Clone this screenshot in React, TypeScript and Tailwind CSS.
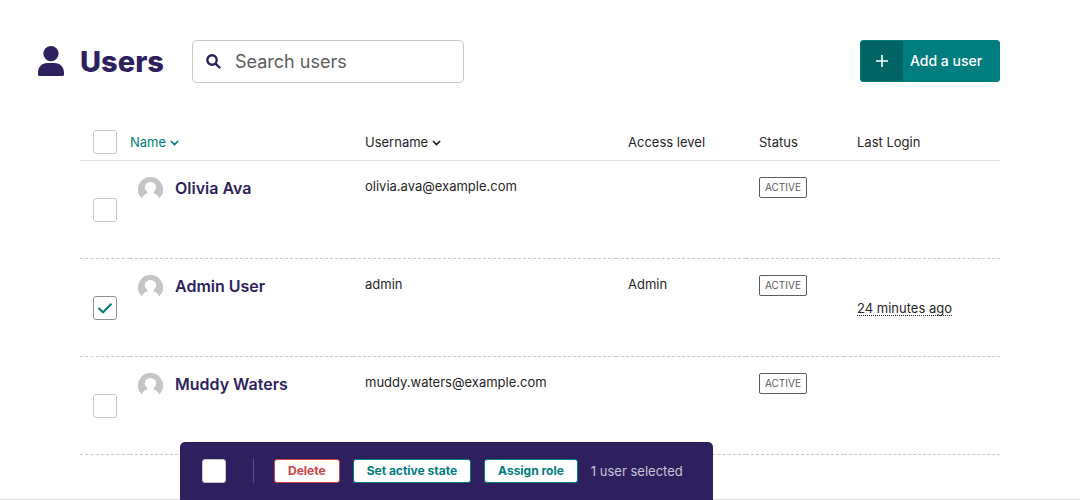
import { useState } from "react";

type User = {
  name: string;
  username: string;
  access?: string;
  lastLogin?: string;
};

const users: User[] = [
  { name: "Olivia Ava", username: "olivia.ava@example.com" },
  { name: "Admin User", username: "admin", access: "Admin", lastLogin: "24 minutes ago" },
  { name: "Muddy Waters", username: "muddy.waters@example.com" },
];

function Checkbox({
  label,
  checked,
  onChange,
}: {
  label: string;
  checked: boolean;
  onChange: () => void;
}) {
  return (
    <label className="relative block size-6">
      <input
        type="checkbox"
        aria-label={label}
        checked={checked}
        onChange={onChange}
        className="peer block size-6 appearance-none rounded-[3px] border border-[#c8c8c8] bg-white checked:border-[#929292]"
      />
      <svg
        viewBox="0 0 24 24"
        className="pointer-events-none absolute inset-0 hidden size-6 peer-checked:block"
        fill="none"
        stroke="#007d7e"
        strokeWidth="2"
        aria-hidden="true"
      >
        <path d="M5.500 12l4.500 4.300L18.500 7.700" />
      </svg>
    </label>
  );
}

function Chevron() {
  return (
    <svg viewBox="0 0 9 8" width="9" height="8" fill="none" stroke="currentColor" strokeWidth="1.500" strokeLinecap="round" strokeLinejoin="round" aria-hidden="true">
      <path d="M1.300 3.400l3.200 3.200 3.200-3.200" />
    </svg>
  );
}

function Avatar() {
  return (
    <svg viewBox="0 0 25 25" className="size-[25px] shrink-0" aria-hidden="true">
      <path
        fill="#c5c5c5"
        d="M12.5 0A12.5 12.5 0 0 0 3.8 21.5C4.8 18.6 6.8 17 9.6 16.2 9.4 15.2 9 14.600 8.400 14 7.300 12.900 6.800 11.500 6.800 10.300 6.800 7.300 9.300 5 12.500 5s5.700 2.300 5.700 5.300c0 1.200-.5 2.600-1.600 3.700-.6.600-1 1.200-1.200 2.200 2.800.8 4.800 2.400 5.800 5.300A12.500 12.500 0 0 0 12.500 0z"
      />
    </svg>
  );
}

export default function App() {
  const [selected, setSelected] = useState<string[]>(["Admin User"]);
  const allSelected = selected.length === users.length;
  const toggle = (name: string) =>
    setSelected((s) => (s.includes(name) ? s.filter((n) => n !== name) : [...s, name]));
  const toggleAll = () => setSelected(allSelected ? [] : users.map((u) => u.name));
  const cell = "border-b border-dashed border-[#c8c8c8]";
  const action = "h-6 rounded-[3px] border bg-white px-[13px] text-xs font-bold";

  return (
    <div className="min-h-screen bg-white font-['Inter',sans-serif] text-[13px] leading-5 text-[#262626]">
      <header className="flex items-start pt-10 pr-20 pl-[38px]">
        <div className="flex h-[42px] w-[126px] shrink-0 items-center gap-4">
          <svg viewBox="0 0 26 30" className="h-[30px] w-[26px] shrink-0" fill="#2e1f5e" aria-hidden="true">
            <circle cx="13" cy="7.600" r="7.600" />
            <path d="M0 30v-3.500C0 21 4 17 9.500 17h7C22 17 26 21 26 26.500V28.500Q26 30 24.500 30h-23Q0 30 0 28.500z" />
          </svg>
          <h1 className="pt-[2px] text-[29px] leading-9 font-extrabold text-[#2e1f5e]">Users</h1>
        </div>
        <div className="ml-7 flex h-[43px] w-[272px] items-center rounded-[5px] border border-[#c8c8c8] pl-[13px]">
          <svg viewBox="0 0 15 15" className="mr-[14px] size-[15px] shrink-0" fill="none" stroke="#2e1f5e" strokeWidth="2.400" strokeLinecap="round" aria-hidden="true">
            <circle cx="6" cy="6" r="4.700" />
            <path d="M9.800 9.800L13.500 13.500" />
          </svg>
          <input
            type="search"
            aria-label="Search users"
            placeholder="Search users"
            className="w-full min-w-0 bg-transparent text-lg outline-none placeholder:text-[#5c5c5c]"
          />
        </div>
        <a
          href="#add"
          className="ml-auto flex h-[42px] w-[140px] items-center overflow-hidden rounded-[3px] border border-[#007d7e] bg-[#007d7e] text-sm font-medium text-white"
        >
          <span className="mr-[7px] flex h-full w-[42px] items-center justify-center bg-[#006465]">
            <svg viewBox="0 0 12 12" className="size-3" fill="none" stroke="white" strokeWidth="1.600" aria-hidden="true">
              <path d="M6 0v12M0 6h12" />
            </svg>
          </span>
          Add a user
        </a>
      </header>

      <main className="px-20 pt-10 pb-11">
        <table className="w-full table-fixed border-separate border-spacing-0 text-left">
          <colgroup>
            <col className="w-[50px]" />
            <col className="w-[223px]" />
            <col className="w-[263px]" />
            <col className="w-[130px]" />
            <col className="w-[98px]" />
            <col />
          </colgroup>
          <thead>
            <tr className="h-[38px] *:border-b *:border-[#dedede] *:font-normal">
              <th className="pl-[13px]">
                <Checkbox label="Select all" checked={allSelected} onChange={toggleAll} />
              </th>
              <th>
                <a href="#name" className="flex items-center gap-1 text-[#007d7e]">
                  Name <Chevron />
                </a>
              </th>
              <th className="pl-3">
                <a href="#username" className="flex items-center gap-1">
                  Username <Chevron />
                </a>
              </th>
              <th className="pl-3">Access level</th>
              <th className="pl-[13px]">Status</th>
              <th className="pl-[13px]">Last Login</th>
            </tr>
          </thead>
          <tbody>
            {users.map((u) => (
              <tr key={u.name} className="h-[98px]">
                <td className={`${cell} pt-4 pb-4 pl-[13px]`}>
                  <Checkbox
                    label={`Select ${u.name}`}
                    checked={selected.includes(u.name)}
                    onChange={() => toggle(u.name)}
                  />
                </td>
                <td className={`${cell} pt-4 pl-2 align-top`}>
                  <div className="flex items-start gap-3">
                    <Avatar />
                    <a href="#user" className="text-base leading-[22px] font-semibold text-[#2e1f5e]">
                      {u.name}
                    </a>
                  </div>
                </td>
                <td className={`${cell} pt-[15px] pl-3 align-top`}>{u.username}</td>
                <td className={`${cell} pt-[15px] pl-3 align-top`}>{u.access}</td>
                <td className={`${cell} pt-4 pl-[13px] align-top`}>
                  <span className="block w-fit rounded-[2px] border border-[#5c5c5c] px-[5px] text-[10px] leading-[19px] text-[#5c5c5c]">
                    ACTIVE
                  </span>
                </td>
                <td className={`${cell} pl-[13px]`}>
                  {u.lastLogin && (
                    <span className="inline-block border-b border-dotted border-[#262626] leading-[14px]">{u.lastLogin}</span>
                  )}
                </td>
              </tr>
            ))}
          </tbody>
        </table>
      </main>
      <footer className="border-t border-[#dedede]" />

      {selected.length > 0 && (
        <section
          aria-label="Bulk actions"
          className="fixed bottom-0 left-[180px] flex h-[58px] items-center rounded-t-[5px] bg-[#2e1f5e] pr-[30px] pl-[22px]"
        >
          <Checkbox label="Select all users" checked={allSelected} onChange={toggleAll} />
          <div className="mr-5 ml-[27px] h-6 w-px bg-[#5b5178]" />
          <div className="flex items-center gap-[13px]">
            <button type="button" className={`${action} border-[#cd4444] text-[#cd4444]`}>Delete</button>
            <button type="button" className={`${action} border-[#007d7e] text-[#007d7e]`}>Set active state</button>
            <button type="button" className={`${action} border-[#007d7e] text-[#007d7e]`}>Assign role</button>
            <span className="text-[#c8c4d4]">
              {selected.length} {selected.length === 1 ? "user" : "users"} selected
            </span>
          </div>
        </section>
      )}
    </div>
  );
}
